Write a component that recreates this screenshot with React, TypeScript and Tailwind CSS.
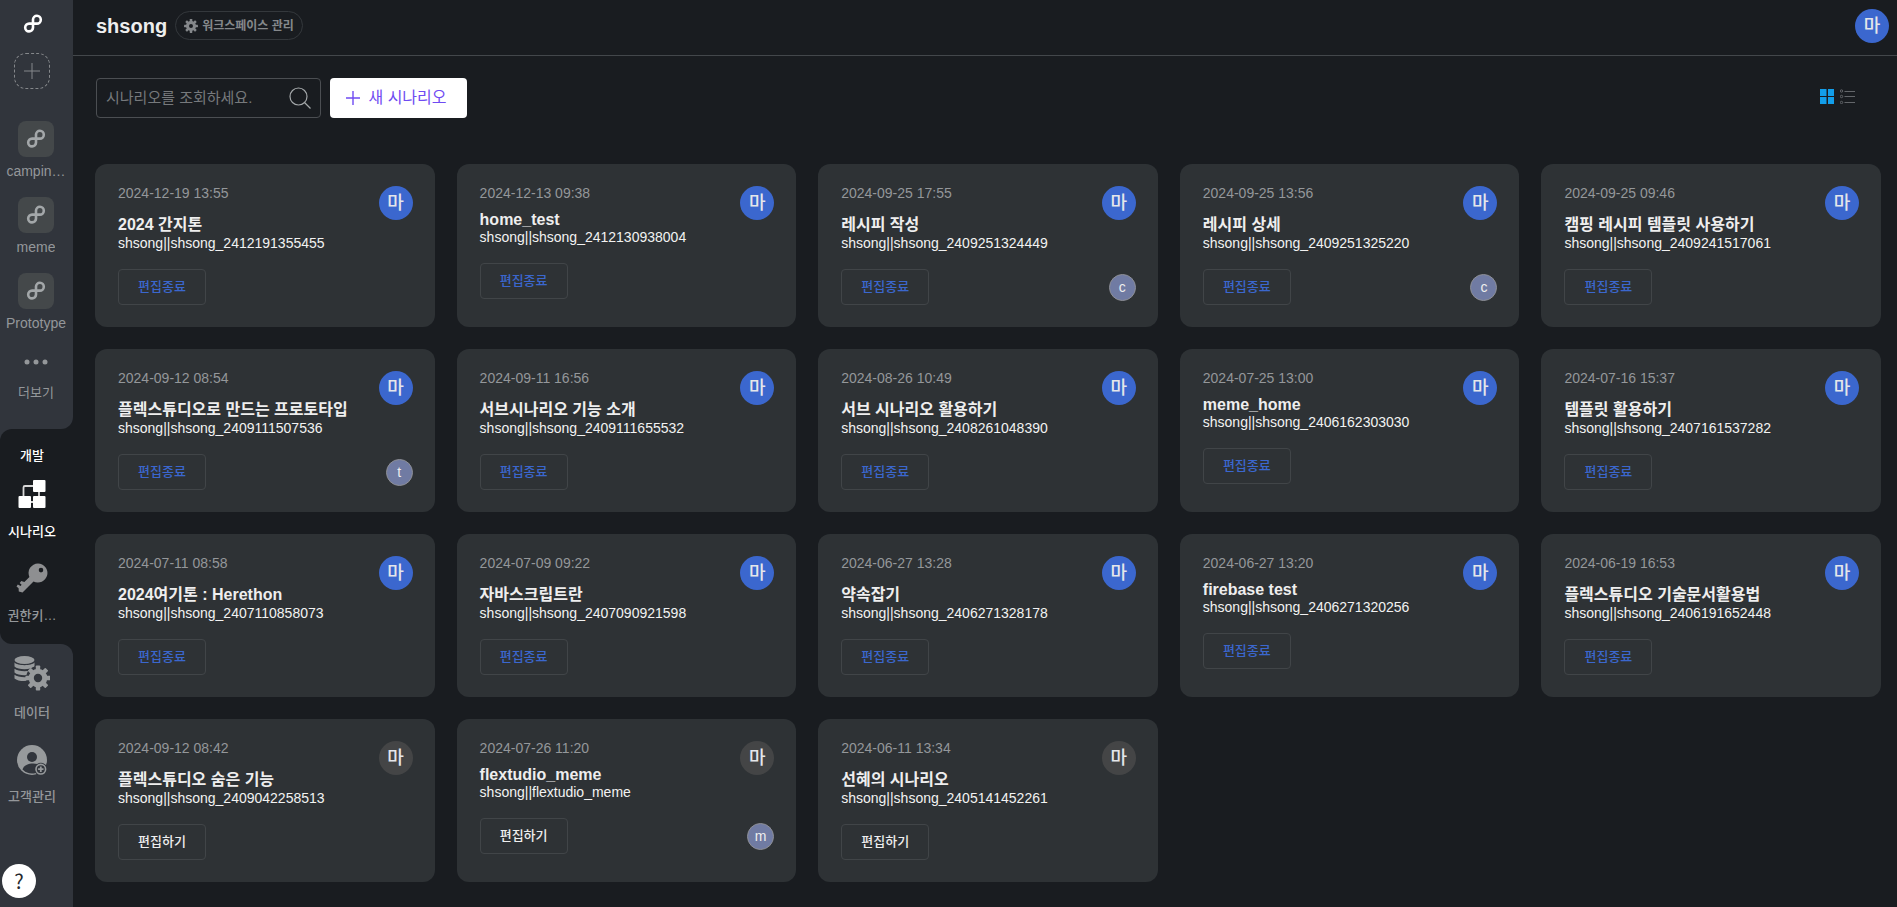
import type { ReactNode } from "react";

type Scenario = {
  date: string;
  title: string;
  id: string;
  guest?: string;
  closed?: boolean;
};

const scenarios: Scenario[] = [
  { date: "2024-12-19 13:55", title: "2024 간지톤", id: "shsong||shsong_2412191355455" },
  { date: "2024-12-13 09:38", title: "home_test", id: "shsong||shsong_2412130938004" },
  { date: "2024-09-25 17:55", title: "레시피 작성", id: "shsong||shsong_2409251324449", guest: "c" },
  { date: "2024-09-25 13:56", title: "레시피 상세", id: "shsong||shsong_2409251325220", guest: "c" },
  { date: "2024-09-25 09:46", title: "캠핑 레시피 템플릿 사용하기", id: "shsong||shsong_2409241517061" },
  { date: "2024-09-12 08:54", title: "플렉스튜디오로 만드는 프로토타입", id: "shsong||shsong_2409111507536", guest: "t" },
  { date: "2024-09-11 16:56", title: "서브시나리오 기능 소개", id: "shsong||shsong_2409111655532" },
  { date: "2024-08-26 10:49", title: "서브 시나리오 활용하기", id: "shsong||shsong_2408261048390" },
  { date: "2024-07-25 13:00", title: "meme_home", id: "shsong||shsong_2406162303030" },
  { date: "2024-07-16 15:37", title: "템플릿 활용하기", id: "shsong||shsong_2407161537282" },
  { date: "2024-07-11 08:58", title: "2024여기톤 : Herethon", id: "shsong||shsong_2407110858073" },
  { date: "2024-07-09 09:22", title: "자바스크립트란", id: "shsong||shsong_2407090921598" },
  { date: "2024-06-27 13:28", title: "약속잡기", id: "shsong||shsong_2406271328178" },
  { date: "2024-06-27 13:20", title: "firebase test", id: "shsong||shsong_2406271320256" },
  { date: "2024-06-19 16:53", title: "플렉스튜디오 기술문서활용법", id: "shsong||shsong_2406191652448" },
  { date: "2024-09-12 08:42", title: "플렉스튜디오 숨은 기능", id: "shsong||shsong_2409042258513", closed: true },
  { date: "2024-07-26 11:20", title: "flextudio_meme", id: "shsong||flextudio_meme", guest: "m", closed: true },
  { date: "2024-06-11 13:34", title: "선혜의 시나리오", id: "shsong||shsong_2405141452261", closed: true },
];

function Logo({ className }: { className: string }) {
  return (
    <svg viewBox="0 0 20 20" className={className} fill="none" stroke="currentColor" strokeWidth="2.6" aria-hidden="true">
      <path d="M10 9.6V5.6A3.9 3.9 0 1 1 13.9 9.6H6.1A3.9 3.9 0 1 0 10 13.6V9.6" />
    </svg>
  );
}

function Gear({ className }: { className: string }) {
  return (
    <svg viewBox="0 0 24 24" className={className} aria-hidden="true">
      <g fill="currentColor">
        {[0, 45, 90, 135].map((a) => (
          <rect key={a} x="9.8" y="0" width="4.4" height="24" rx="0.8" transform={`rotate(${a} 12 12)`} />
        ))}
        <circle cx="12" cy="12" r="8.6" />
      </g>
      <circle cx="12" cy="12" r="3.4" className="fill-[#191c20]" />
    </svg>
  );
}

function FlowIcon() {
  return (
    <svg viewBox="0 0 28 30" className="h-[30px] w-7" aria-hidden="true">
      <path d="M5.5 18V7.5A1.5 1.5 0 0 1 7 6H16M21 11V18M11 22H16" fill="none" stroke="#d8d8d8" strokeWidth="1.8" />
      <rect x="15" y="0" width="12.5" height="12" rx="1" fill="#fff" />
      <rect x="0.5" y="16" width="12.5" height="12" rx="1" fill="#fff" />
      <rect x="15" y="16" width="12.5" height="12" rx="1" fill="#fff" />
    </svg>
  );
}

function KeyIcon() {
  return (
    <svg viewBox="0 0 32 32" className="size-8" fill="#8e8f91" aria-hidden="true">
      <path
        fillRule="evenodd"
        d="M22 1.500A9.500 9.500 0 1 1 17.500 19.400L6.500 30.400L2.800 29.500L2.600 26.200L0.500 24.600L1.800 22.600L4.600 23.900L5.600 22.800L3.700 20.900L5.300 19L8.400 20L13.400 14.900A9.500 9.500 0 0 1 22 1.500ZM25 5.800A2.300 2.300 0 1 0 25 10.400A2.300 2.300 0 1 0 25 5.800Z"
      />
    </svg>
  );
}

function DataIcon() {
  return (
    <svg viewBox="0 0 36 35" className="h-[35px] w-9" aria-hidden="true">
      <g fill="#979a9c">
        <ellipse cx="10.5" cy="4" rx="10" ry="4" />
        <path d="M0.5 6.5C3 10 18 10 20.5 6.5V10.5C17 14 4 14 0.5 10.5Z" />
        <path d="M0.5 12.7C4 16 17 16 20.5 12.7V16.5C17 20 4 20 0.5 16.5Z" />
        <path d="M0.5 18.8C4 22 17 22 20.5 18.8V22C17 26 4 26 0.5 22.5Z" />
      </g>
      <circle cx="24" cy="22" r="12" fill="#31353c" />
      <g fill="#979a9c">
        {[0, 45, 90, 135].map((a) => (
          <rect key={a} x="21.8" y="9.5" width="4.4" height="25" rx="0.8" transform={`rotate(${a} 24 22)`} />
        ))}
        <circle cx="24" cy="22" r="9.3" />
      </g>
      <circle cx="24" cy="22" r="4.2" fill="#31353c" />
    </svg>
  );
}

function CustomerIcon() {
  return (
    <svg viewBox="0 0 30 30" className="size-[30px]" aria-hidden="true">
      <circle cx="15" cy="15" r="15" fill="#979a9c" />
      <circle cx="15" cy="12" r="5" fill="#31353c" />
      <path d="M5.5 24.5C7 17.5 20 17 23 20.5L19 28A14 14 0 0 1 5.5 24.5Z" fill="#31353c" />
      <circle cx="23.8" cy="24.2" r="6.5" fill="#31353c" />
      <circle cx="23.8" cy="24.2" r="4.8" fill="none" stroke="#979a9c" strokeWidth="1.6" />
      <path d="M23.8 21.5V26.9M21.1 24.2H26.5" stroke="#979a9c" strokeWidth="1.8" />
    </svg>
  );
}

function Workspace({ name }: { name: string }) {
  return (
    <a href="#" className="flex h-[76px] w-[62px] flex-col items-center gap-[6px] text-sm leading-4 text-[#94979a]">
      <span className="flex size-9 items-center justify-center rounded-lg bg-[#44484a]">
        <Logo className="size-5 text-[#a3a7a9]" />
      </span>
      <span className="max-w-full truncate">{name}</span>
    </a>
  );
}

function NavItem({ icon, label, active }: { icon: ReactNode; label: string; active?: boolean }) {
  return (
    <a
      href="#"
      className={`flex w-16 flex-col items-center text-[13px] leading-5 font-medium ${active ? "text-white" : "text-[#94979a]"}`}
    >
      {icon}
      <span className="mt-3">{label}</span>
    </a>
  );
}

function Avatar({ muted }: { muted?: boolean }) {
  return (
    <span
      className={`flex size-[34px] shrink-0 items-center justify-center rounded-full text-lg font-medium text-[#e4e6ea] ${muted ? "bg-[#444546]" : "bg-[#3b67ce]"}`}
    >
      마
    </span>
  );
}

function Card({ item }: { item: Scenario }) {
  return (
    <article className="h-[163px] rounded-xl bg-[#2e3235] py-5 pr-[22px] pl-[23px]">
      <div className="flex items-start justify-between">
        <div>
          <time className="block text-sm leading-[18px] text-[#94979a]">{item.date}</time>
          <h2 className="mt-[9px] text-base leading-[normal] font-bold text-[#eeeeee]">{item.title}</h2>
          <p className="text-sm leading-4 text-[#f2f2f2]">{item.id}</p>
        </div>
        <div className="pt-[2px]">
          <Avatar muted={item.closed} />
        </div>
      </div>
      <div className="mt-[18px] flex items-center justify-between">
        <button
          className={`h-9 w-[88px] rounded-[4px] border border-[#414548] text-[13px] font-medium ${item.closed ? "text-[#eeeeee]" : "text-[#3b67ce]"}`}
        >
          {item.closed ? "편집하기" : "편집종료"}
        </button>
        {item.guest && (
          <span className="flex size-[27px] items-center justify-center rounded-full border border-[#8e8f95] bg-[#707ba3] text-sm text-[#eeeeee]">
            {item.guest}
          </span>
        )}
      </div>
    </article>
  );
}

export default function App() {
  return (
    <div className="flex min-h-screen bg-[#191c20] font-['Liberation_Sans','Noto_Sans_CJK_KR',sans-serif]">
      <aside className="flex w-[73px] shrink-0 flex-col bg-[#191c20]">
        <div className="flex h-[429px] flex-col rounded-br-xl bg-[#31353c]">
          <a href="#" aria-label="Home" className="mt-[14px] ml-[23px] size-5 text-white">
            <Logo className="size-5" />
          </a>
          <button
            aria-label="Add workspace"
            className="mt-[19px] ml-[14px] flex size-9 items-center justify-center rounded-xl border border-dashed border-[#85888b] text-[#85888b]"
          >
            <svg viewBox="0 0 16 16" className="size-4" stroke="currentColor" aria-hidden="true">
              <path d="M8 0V16M0 8H16" />
            </svg>
          </button>
          <nav aria-label="Workspaces" className="mt-8 ml-[5px] flex flex-col">
            <Workspace name="campin…" />
            <Workspace name="meme" />
            <Workspace name="Prototype" />
            <a href="#" className="mt-[10px] flex w-[62px] flex-col items-center gap-[18px] text-[13px] leading-5 text-[#94979a]">
              <svg viewBox="0 0 24 6" className="h-[6px] w-6" fill="currentColor" aria-hidden="true">
                <circle cx="3" cy="3" r="2.5" />
                <circle cx="12" cy="3" r="2.5" />
                <circle cx="21" cy="3" r="2.5" />
              </svg>
              <span>더보기</span>
            </a>
          </nav>
        </div>
        <div className="bg-[#31353c]">
          <nav aria-label="개발" className="flex h-[215px] flex-col rounded-l-xl bg-[#191c20] pt-[17px]">
            <span className="w-16 text-center text-[13px] leading-5 font-medium text-white">개발</span>
            <div className="mt-[14px] flex flex-col gap-5">
              <NavItem active icon={<FlowIcon />} label="시나리오" />
              <NavItem icon={<KeyIcon />} label="권한키…" />
            </div>
          </nav>
        </div>
        <div className="flex flex-1 flex-col justify-between rounded-tr-xl bg-[#31353c] pt-3 pb-[9px]">
          <nav aria-label="관리" className="flex flex-col gap-[22px]">
            <NavItem icon={<DataIcon />} label="데이터" />
            <NavItem icon={<CustomerIcon />} label="고객관리" />
          </nav>
          <button aria-label="Help" className="ml-[2px] flex size-[34px] items-center justify-center rounded-full bg-white font-['Noto_Sans_CJK_KR',sans-serif] text-xl text-[#25282d]">
            ?
          </button>
        </div>
      </aside>

      <div className="flex min-w-0 flex-1 flex-col">
        <header className="flex h-14 items-center justify-between border-b border-[#43474b] pr-2 pb-1 pl-[23px]">
          <div className="flex items-center gap-2">
            <h1 className="text-xl leading-6 font-bold text-[#eeeeee]">shsong</h1>
            <button className="flex h-[29px] items-center gap-1 rounded-full border border-[#34383c] px-2 text-xs font-bold text-[#85888b]">
              <Gear className="size-[14px]" />
              워크스페이스 관리
            </button>
          </div>
          <Avatar />
        </header>

        <main className="flex flex-col pt-[22px] pr-4 pb-6 pl-[22px]">
          <div className="flex items-start justify-between pr-[26px] pl-px">
            <div className="flex gap-[9px]">
              <label className="flex h-10 w-[225px] items-center rounded-[4px] border border-[#4b4e52] px-[9px]">
                <input
                  type="search"
                  aria-label="시나리오 조회"
                  placeholder="시나리오를 조회하세요."
                  className="min-w-0 flex-1 bg-transparent text-[15px] text-white outline-none placeholder:text-[#76797c]"
                />
                <svg viewBox="0 0 22 22" className="size-[22px] text-[#a3a7a9]" fill="none" stroke="currentColor" strokeWidth="1.2" aria-hidden="true">
                  <circle cx="9.5" cy="9.5" r="8.5" />
                  <path d="M15.5 15.5L21.5 21.5" />
                </svg>
              </label>
              <button className="flex h-10 w-[137px] items-center justify-center gap-2 rounded-[4px] bg-white pr-1 text-base text-[#6f4bf2]">
                <svg viewBox="0 0 14 14" className="size-[14px]" stroke="currentColor" strokeWidth="1.4" aria-hidden="true">
                  <path d="M7 0V14M0 7H14" />
                </svg>
                새 시나리오
              </button>
            </div>
            <div className="flex gap-[6px] pt-[11px]">
              <button aria-label="Grid view">
                <svg viewBox="0 0 14 15" className="h-[15px] w-[14px]" fill="#129eea" aria-hidden="true">
                  <path d="M0 0H6.5V7H0ZM8 0H14V7H8ZM0 8H6.5V15H0ZM8 8H14V15H8Z" />
                </svg>
              </button>
              <button aria-label="List view">
                <svg viewBox="0 0 15 15" className="size-[15px]" fill="none" stroke="#63666a" aria-hidden="true">
                  <circle cx="1.5" cy="2" r="1.2" />
                  <circle cx="1.5" cy="7.5" r="1.2" />
                  <circle cx="1.5" cy="13.5" r="1.2" />
                  <path d="M4.5 2.5H15M4.5 7.5H15M4.5 13.5H15" />
                </svg>
              </button>
            </div>
          </div>

          <section className="mt-[46px] grid grid-cols-5 gap-[22px]">
            {scenarios.map((item) => (
              <Card key={item.date + item.id} item={item} />
            ))}
          </section>
        </main>
      </div>
    </div>
  );
}
